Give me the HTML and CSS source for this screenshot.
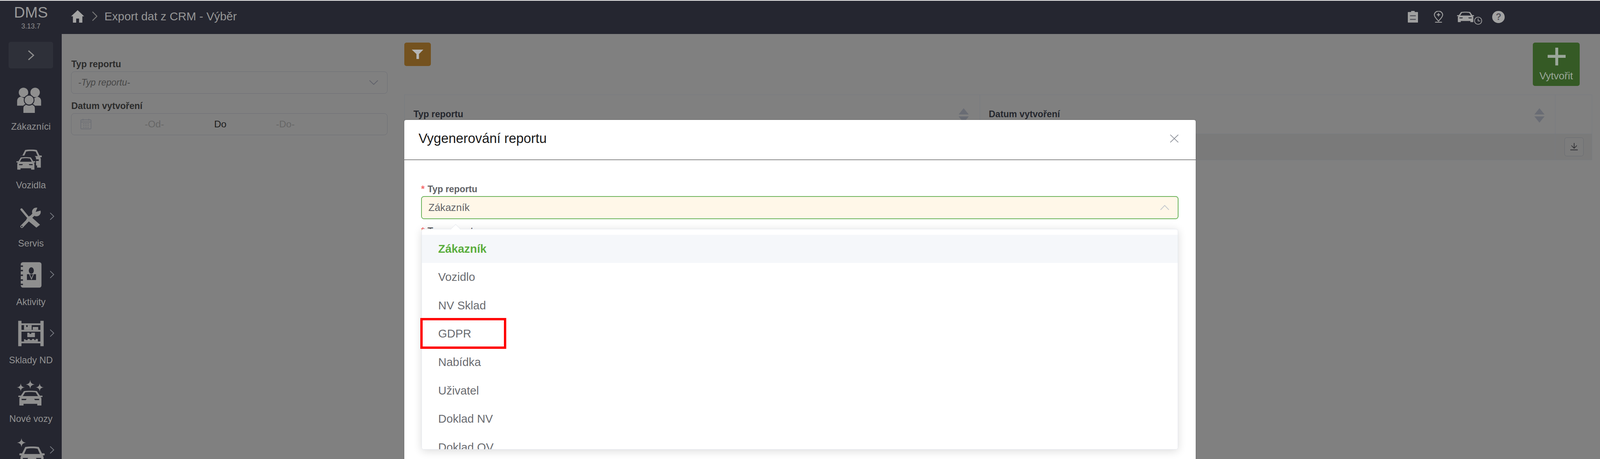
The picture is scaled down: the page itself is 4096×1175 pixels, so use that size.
FILE: index.html
```html
<!DOCTYPE html>
<html lang="cs">
<head>
<meta charset="utf-8">
<title>Export dat z CRM - Výběr</title>
<link rel="stylesheet" href="styles.css">
</head>
<body>
<svg class="defs" width="0" height="0" aria-hidden="true">
  <symbol id="car" viewBox="0 0 64 60" preserveAspectRatio="none">
    <path fill-rule="evenodd" d="M15 2C24 0 40 0 49 2L57 20H62Q64 20 64 22V24Q64 26 62 26H59L61 31V60H50V53H14V60H3V31L5 26H2Q0 26 0 24V22Q0 20 2 20H7ZM18 7L12 22H52L46 7C38 5 26 5 18 7ZM9 33V38H20L22 33ZM55 33V38H44L42 33Z"/>
  </symbol>
  <symbol id="chev" viewBox="0 0 13 21">
    <polyline points="1.5,1 11.5,10.5 1.5,20" fill="none" stroke="currentColor" stroke-width="2"/>
  </symbol>
</svg>
<div class="app">
  <header class="header">
    <div class="brand">
      <div class="brand-name">DMS</div>
      <div class="brand-version">3.13.7</div>
    </div>
    <div class="crumbs">
      <svg class="home" viewBox="0 0 36 35"><path d="M18 0L36 17H31V35H22V23H14V35H5V17H0Z"/></svg>
      <svg class="crumb-sep" viewBox="0 0 13 21" preserveAspectRatio="none"><use href="#chev"/></svg>
      <span class="crumb-title">Export dat z CRM - Výběr</span>
    </div>
    <div class="tools">
      <svg class="tool-clip" viewBox="0 0 28 32"><path d="M9 3V1Q9 0 10 0H18Q19 0 19 1V3H27Q28 3 28 4V31Q28 32 27 32H1Q0 32 0 31V4Q0 3 1 3Z"/><rect x="6" y="12" width="16" height="2.5" class="dark"/><rect x="6" y="22" width="16" height="2.5" class="dark"/></svg>
      <svg class="tool-pin" viewBox="0 0 27 32"><path d="M13.5 28C8 22 2 16 2 11A11.5 10.5 0 0 1 25 11C25 16 19 22 13.5 28Z" fill="none" stroke="currentColor" stroke-width="2.4"/><path d="M4 31H23" stroke="currentColor" stroke-width="2.4"/><path d="M13.5 6V15M9 10.5H18" stroke="currentColor" stroke-width="2.6"/></svg>
      <svg class="tool-car" viewBox="0 0 69 37"><use href="#car" x="0" y="1" width="47" height="29"/><circle cx="58" cy="26" r="10" class="ring"/><path d="M58 20V26.5H64" fill="none" stroke="currentColor" stroke-width="2"/></svg>
      <span class="tool-help">?</span>
    </div>
  </header>
  <div class="body">
    <nav class="sidebar">
      <div class="toggle"><svg class="toggle-icon" viewBox="0 0 18 29"><polyline points="2,2 16,14.5 2,27" fill="none" stroke="currentColor" stroke-width="3.2"/></svg></div>
      <div class="nav">
        <a class="nav-item">
          <svg class="nav-icon" viewBox="30 0 110 70">
            <path d="M47 49V36Q47 27 57 24L70 30V49ZM113 49V36Q113 27 103 24L90 30V49Z"/>
            <circle cx="64.5" cy="12.5" r="13"/><circle cx="96.5" cy="12.5" r="13"/>
            <path class="outlined" d="M63 70V56Q63 48 72 45Q80 50 88 45Q97 48 97 56V70Z"/>
            <circle class="outlined" cx="80" cy="33.5" r="13.5"/>
          </svg>
          <span class="nav-label">Zákazníci</span>
        </a>
        <a class="nav-item">
          <svg class="nav-icon" viewBox="30 0 110 70">
            <use href="#car" x="55" y="8" width="60" height="50"/>
            <rect class="cut" x="44" y="25" width="55" height="42" rx="8"/>
            <use href="#car" x="45" y="29" width="52" height="35"/>
          </svg>
          <span class="nav-label">Vozidla</span>
        </a>
        <a class="nav-item">
          <svg class="nav-icon" viewBox="30 0 110 70">
            <path d="M59 13L78 36" fill="none" stroke="currentColor" stroke-width="6" stroke-linecap="round"/>
            <path d="M72 40L82 30L110 55L100 63Z"/>
            <path d="M60 60L95 24" fill="none" stroke="currentColor" stroke-width="8" stroke-linecap="round"/>
            <circle cx="100" cy="20" r="12"/>
            <path class="cut" d="M98 20L104 5L116 15Z"/>
            <circle cx="60" cy="60" r="2" class="cut"/>
          </svg>
          <svg class="nav-arrow"><use href="#chev"/></svg>
          <span class="nav-label">Servis</span>
        </a>
        <a class="nav-item">
          <svg class="nav-icon" viewBox="30 0 110 70">
            <rect x="57" y="-3" width="57" height="70" rx="6"/>
            <path class="cut" d="M57 6H63V10H57ZM57 18H63V22H57ZM57 31H63V35H57ZM57 44H63V48H57ZM57 56H63V60H57Z"/>
            <ellipse class="cut" cx="86" cy="20" rx="7" ry="9"/>
            <rect class="cut" x="74" y="30" width="25" height="16"/>
            <polyline points="81,30 86.5,43 92,30" fill="none" stroke="currentColor" stroke-width="2"/>
          </svg>
          <svg class="nav-arrow"><use href="#chev"/></svg>
          <span class="nav-label">Aktivity</span>
        </a>
        <a class="nav-item">
          <svg class="nav-icon" viewBox="30 0 110 70">
            <path d="M50 -2H59V5H111V-2H120V68H111V60H59V68H50ZM59 10V23H111V10ZM59 28V55H111V28Z" fill-rule="evenodd"/>
            <path d="M66 10H72V15H76V10H87V23H66ZM90 15H105V23H90ZM75 31H81V34H86V31H96V43H75ZM66 55V49H70V51H76V48H82V51H88V48H94V51H98V48H104V55Z"/>
          </svg>
          <svg class="nav-arrow"><use href="#chev"/></svg>
          <span class="nav-label">Sklady ND</span>
        </a>
        <a class="nav-item">
          <svg class="nav-icon" viewBox="30 0 110 70">
            <path d="M83 0Q84 11 95 12Q84 13 83 24Q82 13 71 12Q82 11 83 0ZM57 9Q58 19 68 20Q58 21 57 31Q56 21 46 20Q56 19 57 9ZM109 9Q110 19 120 20Q110 21 109 31Q108 21 98 20Q108 19 109 9Z"/>
            <use href="#car" x="50" y="29" width="67" height="41"/>
          </svg>
          <span class="nav-label">Nové vozy</span>
        </a>
        <a class="nav-item">
          <svg class="nav-icon nav-icon-tall" viewBox="30 0 110 80">
            <path d="M59 0Q60 11 71 12Q60 13 59 24Q58 13 47 12Q58 11 59 0Z"/>
            <use href="#car" x="53" y="22" width="70" height="58"/>
          </svg>
          <svg class="nav-arrow"><use href="#chev"/></svg>
        </a>
      </div>
    </nav>
    <main class="main">
      <aside class="filters">
        <div class="filter-label">Typ reportu</div>
        <div class="filter-select">
          <span class="filter-placeholder">-Typ reportu-</span>
          <svg class="filter-chevron" viewBox="0 0 25 13"><polyline points="1,1 12.5,12 24,1" fill="none" stroke="currentColor" stroke-width="2"/></svg>
        </div>
        <div class="filter-label filter-label-next">Datum vytvoření</div>
        <div class="filter-dates">
          <svg class="calendar" viewBox="0 0 30 29"><rect x="1" y="3" width="28" height="25" rx="2" fill="none" stroke="currentColor" stroke-width="2"/><path d="M1 9H29" stroke="currentColor" stroke-width="2"/><path d="M7 0V5M23 0V5" stroke="currentColor" stroke-width="2"/><path d="M7 14H11M13 14H17M19 14H23M7 19H11M13 19H17M19 19H23M7 24H11M13 24H17M19 24H23" stroke="currentColor" stroke-width="2"/></svg>
          <span class="date-from">-Od-</span>
          <span class="date-sep">Do</span>
          <span class="date-to">-Do-</span>
        </div>
      </aside>
      <section class="content">
        <div class="toolbar">
          <button class="btn-filter"><svg class="btn-filter-icon" viewBox="0 0 32 26"><path d="M0 0H32L20 12V26H13V12Z"/></svg></button>
          <button class="btn-create">
            <svg class="btn-create-icon" viewBox="0 0 50 49"><path d="M21 0H29V20H50V28H29V49H21V28H0V20H21Z"/></svg>
            <span>Vytvořit</span>
          </button>
        </div>
        <div class="table">
          <div class="th">
            <span>Typ reportu</span>
            <span class="sort"><i class="sort-up"></i><i class="sort-down"></i></span>
          </div>
          <div class="th">
            <span>Datum vytvoření</span>
            <span class="sort"><i class="sort-up"></i><i class="sort-down"></i></span>
          </div>
          <div class="th"></div>
          <div class="td"></div>
          <div class="td"></div>
          <div class="td td-action">
            <button class="btn-download"><svg viewBox="0 0 21 20"><path d="M10.5 0V14M3 7L10.5 14.5L18 7" fill="none" stroke="currentColor" stroke-width="1.8"/><path d="M0 19H21" stroke="currentColor" stroke-width="2"/></svg></button>
          </div>
        </div>
      </section>
    </main>
  </div>
  <div class="modal">
    <div class="modal-header">
      <span class="modal-title">Vygenerování reportu</span>
      <svg class="modal-close" viewBox="0 0 24 23"><path d="M1 1L23 22M23 1L1 22" fill="none" stroke="currentColor" stroke-width="2"/></svg>
    </div>
    <div class="modal-body">
      <label class="field-label"><span class="req">*</span>Typ reportu</label>
      <div class="field-select">
        <span>Zákazník</span>
        <svg class="field-chevron" viewBox="0 0 25 14"><polyline points="1,13 12.5,1 24,13" fill="none" stroke="currentColor" stroke-width="2"/></svg>
      </div>
      <label class="field-label field-label-next"><span class="req">*</span>Typ exportu</label>
      <div class="dropdown">
        <span class="dropdown-arrow"></span>
        <ul class="dropdown-list">
          <li class="option option-active">Zákazník</li>
          <li class="option">Vozidlo</li>
          <li class="option">NV Sklad</li>
          <li class="option">GDPR</li>
          <li class="option">Nabídka</li>
          <li class="option">Uživatel</li>
          <li class="option">Doklad NV</li>
          <li class="option">Doklad OV</li>
        </ul>
        <span class="highlight"></span>
      </div>
    </div>
  </div>
</div>
</body>
</html>
```

FILE: styles.css
```css
* { box-sizing: border-box; }
html, body { margin: 0; padding: 0; overflow: hidden; background: #808080; }
body { font-family: "Liberation Sans", Arial, sans-serif; }
.defs { position: absolute; }
.app {
  zoom: 0.9309;
  position: relative;
  width: 4400px;
  height: 1262px;
  display: flex;
  flex-direction: column;
  overflow: hidden;
  border-top: 3px solid #e6e6e6;
  background: #808080;
}

/* header */
.header {
  flex: 0 0 91px;
  display: flex;
  align-items: flex-start;
  background: #252630;
  color: #959595;
}
.brand {
  width: 170px;
  padding-top: 13px;
  text-align: center;
}
.brand-name { font-size: 42px; line-height: 38px; color: #999; }
.brand-version { margin-top: 9px; font-size: 19px; line-height: 20px; color: #8f8f8f; }
.crumbs { display: flex; align-items: center; margin: 25px 0 0 26px; height: 36px; }
.home { width: 36px; height: 35px; fill: #a3a3a3; }
.crumb-sep { width: 16px; height: 27px; margin-left: 20px; color: #777; }
.crumb-title { margin-left: 19px; font-size: 32px; line-height: 36px; color: #969696; }
.tools {
  display: flex;
  align-items: flex-start;
  margin: 28px 262px 0 auto;
  color: #a0a0a0;
  fill: #a0a0a0;
}
.tool-clip { width: 28px; height: 32px; }
.tool-clip .dark { fill: #4a4a52; }
.tool-pin { width: 27px; height: 32px; margin-left: 43px; fill: none; }
.tool-car { width: 69px; height: 39px; margin-left: 38px; }
.tool-car .ring { fill: #252630; stroke: currentColor; stroke-width: 2; }
.tool-help {
  width: 34px;
  height: 33px;
  margin-left: 28px;
  border-radius: 50%;
  background: #a3a3a3;
  color: #55535a;
  font-size: 25px;
  font-weight: bold;
  line-height: 33px;
  text-align: center;
}

/* layout */
.body { flex: 1; min-height: 0; display: flex; }
.sidebar {
  flex: 0 0 170px;
  display: flex;
  flex-direction: column;
  align-items: center;
  overflow: hidden;
  background: #252630;
  color: #8f8f8f;
  fill: #8f8f8f;
}
.toggle {
  flex: 0 0 73px;
  width: 123px;
  margin-top: 22px;
  display: flex;
  align-items: center;
  justify-content: center;
  border-radius: 6px;
  background: #2e3039;
}
.toggle-icon { width: 18px; height: 29px; color: #8f8f8f; }
.nav { margin-top: 54px; width: 170px; }
.nav-item {
  position: relative;
  height: 160.6px;
  display: flex;
  flex-direction: column;
  align-items: center;
}
.nav-icon { width: 110px; height: 70px; flex: none; overflow: visible; color: #8f8f8f; }
.nav-icon-tall { height: 80px; }
.nav-icon .cut { fill: #252630; }
.nav-icon .outlined { stroke: #252630; stroke-width: 2.5; }
.nav-label { margin-top: 22px; font-size: 25.5px; line-height: 30px; color: #939393; white-space: nowrap; }
.nav-arrow { position: absolute; left: 136px; top: 21px; width: 13px; height: 21px; color: #7b7e85; }

/* filters */
.main { flex: 1; min-width: 0; display: flex; background: #808080; }
.filters { flex: 0 0 942px; padding: 69px 0 0 26px; }
.filter-label { font-size: 25px; font-weight: bold; line-height: 30px; color: #2b2b2b; }
.filter-label-next { margin-top: 19px; }
.filter-select, .filter-dates {
  width: 870px;
  margin-top: 4px;
  display: flex;
  align-items: center;
  border: 2px solid #6e6f76;
  border-radius: 9px;
  font-size: 25px;
}
.filter-select { height: 62px; padding: 0 25px 0 18px; }
.filter-placeholder { font-style: italic; color: #474747; }
.filter-chevron { width: 25px; height: 13px; margin-left: auto; color: #5e6069; }
.filter-dates { height: 61px; padding-left: 24px; font-size: 26.5px; }
.calendar { width: 30px; height: 29px; color: #6d6f75; }
.date-from { margin-left: 147px; color: #666; }
.date-sep { margin-left: 138px; color: #1c1c1c; }
.date-to { margin-left: 136px; color: #666; }

/* content */
.content { flex: 0 0 3265px; }
.toolbar {
  display: flex;
  align-items: flex-start;
  justify-content: space-between;
  padding: 24px 34px 0 0;
}
button { padding: 0; border: 0; font-family: inherit; }
.btn-filter {
  width: 73px;
  height: 64px;
  display: flex;
  align-items: center;
  justify-content: center;
  border-radius: 6px;
  background: #74521f;
}
.btn-filter-icon { width: 32px; height: 26px; fill: #b5b5b5; }
.btn-create {
  width: 129px;
  height: 119px;
  display: flex;
  flex-direction: column;
  align-items: center;
  padding-top: 14px;
  border-radius: 6px;
  background: #355a25;
  color: #9ba79a;
  font-size: 28px;
  line-height: 30px;
}
.btn-create-icon { width: 50px; height: 49px; margin: 0 0 14px 2px; fill: #9ba79a; }
.table {
  margin-top: 24px;
  display: grid;
  grid-template-columns: 1582px 1583px 100px;
  grid-template-rows: 107px 72px;
  border-top: 1px solid #777a80;
  border-left: 1px solid #777a80;
}
.th, .td { border-right: 1px solid #777a80; border-bottom: 1px solid #777a80; }
.th {
  display: flex;
  align-items: center;
  justify-content: space-between;
  padding: 0 30px 0 24px;
  font-size: 25px;
  font-weight: bold;
  color: #25272e;
}
.td { background: #7a7a7a; }
.td-action { padding-left: 24px; display: flex; align-items: center; }
.sort { display: flex; flex-direction: column; gap: 5px; margin-top: 6px; }
.sort i { display: block; width: 0; height: 0; border-left: 15px solid transparent; border-right: 15px solid transparent; }
.sort-up { border-bottom: 18px solid #696c74; }
.sort-down { border-top: 18px solid #696c74; }
.btn-download {
  width: 53px;
  height: 52px;
  display: flex;
  align-items: center;
  justify-content: center;
  border: 2px solid #696b72;
  border-radius: 6px;
  background: #7c7c7c;
  color: #2c2c30;
}
.btn-download svg { width: 21px; height: 20px; }

/* modal */
.modal {
  position: absolute;
  left: 1112px;
  top: 328px;
  bottom: 0;
  width: 2176px;
  border-radius: 5px 5px 0 0;
  background: #fff;
  box-shadow: 0 1px 3px rgba(0, 0, 0, .3);
}
.modal-header {
  height: 110px;
  display: flex;
  align-items: center;
  justify-content: space-between;
  padding: 0 47px 6px 39px;
  border-bottom: 3px solid #8a8a8a;
}
.modal-title { font-size: 36.8px; color: #1a1a1a; }
.modal-close { width: 24px; height: 23px; color: #90949c; }
.modal-body { position: relative; padding: 66px 47px 0 46px; }
.field-label { display: block; font-size: 25px; font-weight: bold; line-height: 30px; color: #606266; }
.field-label-next { margin-top: 19px; }
.req { margin-right: 8px; color: #f56c6c; }
.field-select {
  height: 63px;
  margin-top: 3px;
  display: flex;
  align-items: center;
  justify-content: space-between;
  padding: 0 23px 0 18px;
  border: 2.5px solid #6cb35a;
  border-radius: 8px;
  background: #fff7e8;
  font-size: 28px;
  color: #606266;
}
.field-chevron { width: 25px; height: 14px; color: #c0c4cc; }
.dropdown {
  position: absolute;
  left: 47px;
  top: 189px;
  width: 2081px;
  height: 607px;
  border-radius: 6px;
  background: #fff;
  box-shadow: 0 4px 24px rgba(0, 0, 0, .14);
}
.dropdown-arrow {
  position: absolute;
  z-index: 1;
  left: 85px;
  top: -9px;
  width: 18px;
  height: 18px;
  transform: rotate(45deg);
  border-top: 1px solid #e4e7ed;
  border-left: 1px solid #e4e7ed;
  background: #fff;
}
.dropdown-list {
  position: relative;
  height: 100%;
  margin: 0;
  padding: 15px 0 0;
  overflow: hidden;
  list-style: none;
  border: 1px solid #e4e7ed;
  border-radius: 6px;
  background: #fff;
}
.option { height: 78px; padding-left: 45px; font-size: 31.5px; line-height: 78px; color: #696b70; }
.option-active { background: #f5f7fa; color: #5aae3e; font-weight: bold; }
.highlight {
  position: absolute;
  left: -3px;
  top: 245px;
  width: 236px;
  height: 85px;
  border: 7px solid #ff0000;
}
```
